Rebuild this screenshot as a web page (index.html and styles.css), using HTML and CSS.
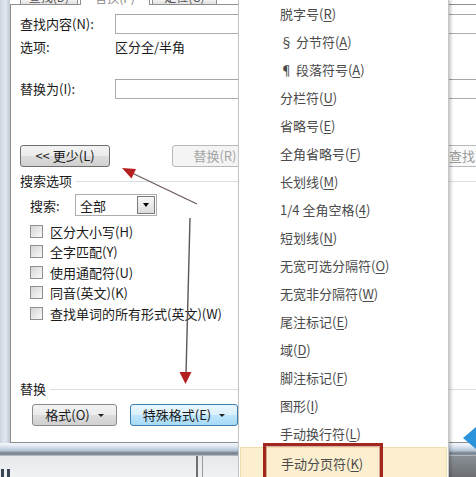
FILE: index.html
```html
<!DOCTYPE html>
<html lang="zh-CN">
<head>
<meta charset="utf-8">
<title>查找和替换</title>
<link rel="stylesheet" href="styles.css">
</head>
<body>
<div class="screen">
  <div class="win">
    <div class="frame-left"></div>
    <div class="dialog">
      <div class="tabs">
        <div class="tab t1"><span>查找(D)</span></div>
        <div class="tab t2 active"><span>替换(P)</span></div>
        <div class="tab t3"><span>定位(G)</span></div>
      </div>
      <div class="panel">
        <div class="row r1">
          <div class="lbl">查找内容(N):</div>
          <div class="input"></div>
        </div>
        <div class="row r2">
          <div class="lbl">选项:</div>
          <div class="val">区分全/半角</div>
        </div>
        <div class="row r3">
          <div class="lbl">替换为(I):</div>
          <div class="input"></div>
        </div>
        <div class="row btnrow">
          <div class="btn b-less">&lt;&lt; 更少(L)</div>
          <div class="btn b-rep">替换(R)</div>
          <div class="btn b-find">查找下一处(F)</div>
        </div>
        <div class="group g1">搜索选项</div>
        <div class="row srow">
          <div class="slbl">搜索:</div>
          <div class="select"><span>全部</span><span class="drop"></span></div>
        </div>
        <div class="checks">
          <div class="chk"><span class="box"></span>区分大小写(H)</div>
          <div class="chk"><span class="box"></span>全字匹配(Y)</div>
          <div class="chk"><span class="box"></span>使用通配符(U)</div>
          <div class="chk"><span class="box"></span>同音(英文)(K)</div>
          <div class="chk"><span class="box"></span>查找单词的所有形式(英文)(W)</div>
        </div>
        <div class="group g2">替换</div>
        <div class="row frow">
          <div class="btn b-fmt">格式(O)<span class="tri"></span></div>
          <div class="btn b-spec">特殊格式(E)<span class="tri"></span></div>
        </div>
      </div>
    </div>
  </div>
  <div class="bottom">
    <div class="bband"></div>
    <div class="under">
      <span class="ii"></span>
      <span class="vline"></span>
      <span class="rdark"></span>
    </div>
  </div>

  <div class="menu">
    <div class="mi">脱字号(<u>R</u>)</div>
    <div class="mi">§ 分节符(<u>A</u>)</div>
    <div class="mi">¶ 段落符号(<u>A</u>)</div>
    <div class="mi">分栏符(<u>U</u>)</div>
    <div class="mi">省略号(<u>E</u>)</div>
    <div class="mi">全角省略号(<u>F</u>)</div>
    <div class="mi">长划线(<u>M</u>)</div>
    <div class="mi">1/4 全角空格(<u>4</u>)</div>
    <div class="mi">短划线(<u>N</u>)</div>
    <div class="mi">无宽可选分隔符(<u>O</u>)</div>
    <div class="mi">无宽非分隔符(<u>W</u>)</div>
    <div class="mi">尾注标记(<u>E</u>)</div>
    <div class="mi">域(<u>D</u>)</div>
    <div class="mi">脚注标记(<u>F</u>)</div>
    <div class="mi">图形(<u>I</u>)</div>
    <div class="mi">手动换行符(<u>L</u>)</div>
    <div class="mi hl">手动分页符(<u>K</u>)</div>
  </div>
  <div class="redbox"></div>

  <svg class="blue" width="14" height="22" viewBox="0 0 14 22">
    <polygon points="1,11 14,0 14,22" fill="#2b93dc"/>
  </svg>

  <svg class="arrows" width="476" height="477" viewBox="0 0 476 477">
    <line x1="197" y1="204" x2="132" y2="173" stroke="#6e5a5a" stroke-width="1.3"/>
    <polygon points="122,168 136,169 131.5,178.5" fill="#b3201f"/>
    <line x1="190" y1="218" x2="186" y2="374" stroke="#5e5656" stroke-width="1.4"/>
    <polygon points="179.5,372 191.5,372 185.5,384" fill="#b3201f"/>
  </svg>
</div>
</body>
</html>
```

FILE: styles.css
```css
* { box-sizing: border-box; }
html, body { margin: 0; padding: 0; }
body {
  width: 476px;
  height: 477px;
  overflow: hidden;
  background: #fff;
  font-family: "Noto Sans CJK SC", "Noto Sans", sans-serif;
  font-size: 13px;
  color: #1a1a1a;
}
.screen {
  position: relative;
  width: 476px;
  height: 477px;
  overflow: hidden;
  display: flex;
  flex-direction: column;
}
.win {
  display: flex;
  height: 443px;
  flex: none;
}
.frame-left {
  width: 10px;
  flex: none;
  background: linear-gradient(to right, #cdd6e0, #e2e8ef 55%, #bfc9d4);
}
.dialog {
  width: 600px;
  flex: none;
  display: flex;
  flex-direction: column;
}
.tabs {
  height: 4px;
  display: flex;
  align-items: flex-end;
  padding-left: 10px;
  gap: 2px;
  flex: none;
}
.tab {
  height: 4px;
  overflow: hidden;
  border-left: 1px solid #8e8f8f;
  border-right: 1px solid #8e8f8f;
  background: linear-gradient(#f2f2f2, #e2e2e2);
  display: flex;
  justify-content: center;
  align-items: flex-end;
  font-size: 12px;
  color: #555;
}
.tab span { line-height: 14px; white-space: nowrap; }
.t1 { width: 58px; }
.t2 { width: 70px; }
.t3 { width: 65px; }
.tab.active {
  position: relative;
  z-index: 1;
  height: 5px;
  margin-bottom: -1px;
  background: #fff;
  color: #888;
}
.panel {
  flex: 1;
  border: 1px solid #8e8f8f;
  background: #fff;
  padding-left: 9px;
  display: flex;
  flex-direction: column;
}
.row {
  display: flex;
  align-items: center;
  flex: none;
}
.lbl { width: 95px; flex: none; line-height: 20px; white-space: nowrap; }
.val { line-height: 20px; }
.input {
  flex: 1;
  height: 20px;
  border: 1px solid #abadb3;
  border-top-color: #a3a6ad;
  background: #fff;
}
.r1 { margin-top: 9px; height: 20px; }
.r2 { margin-top: 3px; height: 20px; }
.r3 { margin-top: 22px; height: 20px; }
.btnrow { margin-top: 46px; height: 22px; }
.btn {
  height: 22px;
  flex: none;
  border: 1px solid #707070;
  border-radius: 3px;
  background: linear-gradient(#f3f3f3, #ebebeb 50%, #dddddd 51%, #d0d0d0);
  display: flex;
  align-items: center;
  justify-content: center;
  line-height: 16px;
  white-space: nowrap;
  color: #1a1a1a;
}
.b-less { width: 90px; }
.b-rep {
  width: 86px;
  margin-left: 62px;
  border-color: #b5b9bc;
  background: #f4f4f4;
  color: #a5a5a5;
}
.b-find {
  width: 110px;
  margin-left: 180px;
  justify-content: flex-start;
  padding-left: 10px;
  border-color: #b5b9bc;
  background: #fafafa;
  color: #9a9a9a;
}
.group {
  display: flex;
  align-items: center;
  height: 16px;
  line-height: 16px;
  flex: none;
  white-space: nowrap;
}
.group::after {
  content: "";
  flex: 1;
  border-top: 1px solid #d5dfe5;
  margin-left: 4px;
  margin-top: 1px;
}
.g1 { margin-top: 6px; }
.g2 { margin-top: 57.5px; }
.srow { margin-top: 5px; height: 22px; padding-left: 10px; }
.slbl { width: 45px; flex: none; }
.select {
  width: 82px;
  height: 22px;
  border: 1px solid #abadb3;
  display: flex;
  align-items: center;
  justify-content: space-between;
  padding: 0 1px 0 4px;
}
.drop {
  width: 18px;
  height: 18px;
  border: 1px solid #7a7a7a;
  background: linear-gradient(#f7f7f7, #dcdcdc);
  display: flex;
  align-items: center;
  justify-content: center;
}
.drop::before {
  content: "";
  border-left: 3.5px solid transparent;
  border-right: 3.5px solid transparent;
  border-top: 4px solid #000;
}
.checks {
  margin-top: 5px;
  padding-left: 10px;
  display: flex;
  flex-direction: column;
  flex: none;
}
.chk {
  height: 20.5px;
  display: flex;
  align-items: center;
  gap: 7px;
  white-space: nowrap;
}
.box {
  width: 13px;
  height: 13px;
  flex: none;
  border: 1px solid #8f8f8f;
  background: linear-gradient(135deg, #d6d6d6, #f8f8f8);
}
.frow { margin-top: 7px; height: 22px; padding-left: 12px; gap: 13px; }
.b-fmt { width: 85px; border-color: #8a8a8a; }
.b-spec {
  width: 108px;
  border-color: #3c7fb1;
  background: linear-gradient(#eaf6fd, #d9f0fc 50%, #bee6fd 51%, #a7d9f5);
}
.tri {
  margin-left: 8px;
  border-left: 3px solid transparent;
  border-right: 3px solid transparent;
  border-top: 3px solid #222;
}
.bottom {
  height: 34px;
  flex: none;
  display: flex;
  flex-direction: column;
}
.bband {
  height: 13px;
  flex: none;
  background: linear-gradient(#f3f7fb 0, #e2eaf3 3px, #c3d1e0 6px, #aebccb 8px, #76818e 10px, #8a949f 12px, #d4d7db 13px);
}
.under {
  flex: 1;
  background: linear-gradient(#e6e8eb, #f1f2f4);
  display: flex;
  align-items: stretch;
}
.ii {
  align-self: flex-end;
  width: 9px;
  height: 8px;
  margin-left: 1px;
  border-left: 3px solid #3b4654;
  border-right: 3px solid #3b4654;
}
.vline {
  margin-left: 186px;
  width: 7px;
  border-left: 2px solid #6f6f6f;
  border-right: 1px solid #9a9a9a;
}
.rdark {
  margin-left: auto;
  width: 28px;
  background: linear-gradient(#8a8f95, #6c7075);
}
.menu {
  position: absolute;
  left: 238px;
  top: -2px;
  width: 211px;
  background: #fff;
  border: 1px solid #c5c5c5;
  box-shadow: 2px 2px 3px rgba(0, 0, 0, 0.22);
  color: #4a4a4a;
  font-size: 13px;
  z-index: 2;
}
.mi {
  height: 28px;
  display: flex;
  align-items: center;
  padding-left: 41px;
  white-space: nowrap;
}
.mi u { text-decoration-thickness: 1px; text-underline-offset: 2px; }
.mi.hl {
  height: 32px;
  margin: 0 1px;
  padding-left: 40px;
  background: #fcefcf;
  border: 1px solid #f0dea8;
}
.redbox {
  position: absolute;
  left: 263px;
  top: 443px;
  width: 120px;
  height: 42px;
  border: 3px solid #a2281f;
  box-shadow: inset 0 0 0 1px rgba(150, 30, 20, 0.35);
  z-index: 3;
}
.blue {
  position: absolute;
  left: 462px;
  top: 427px;
  z-index: 1;
}
.arrows {
  position: absolute;
  left: 0;
  top: 0;
  z-index: 4;
  pointer-events: none;
}
```
